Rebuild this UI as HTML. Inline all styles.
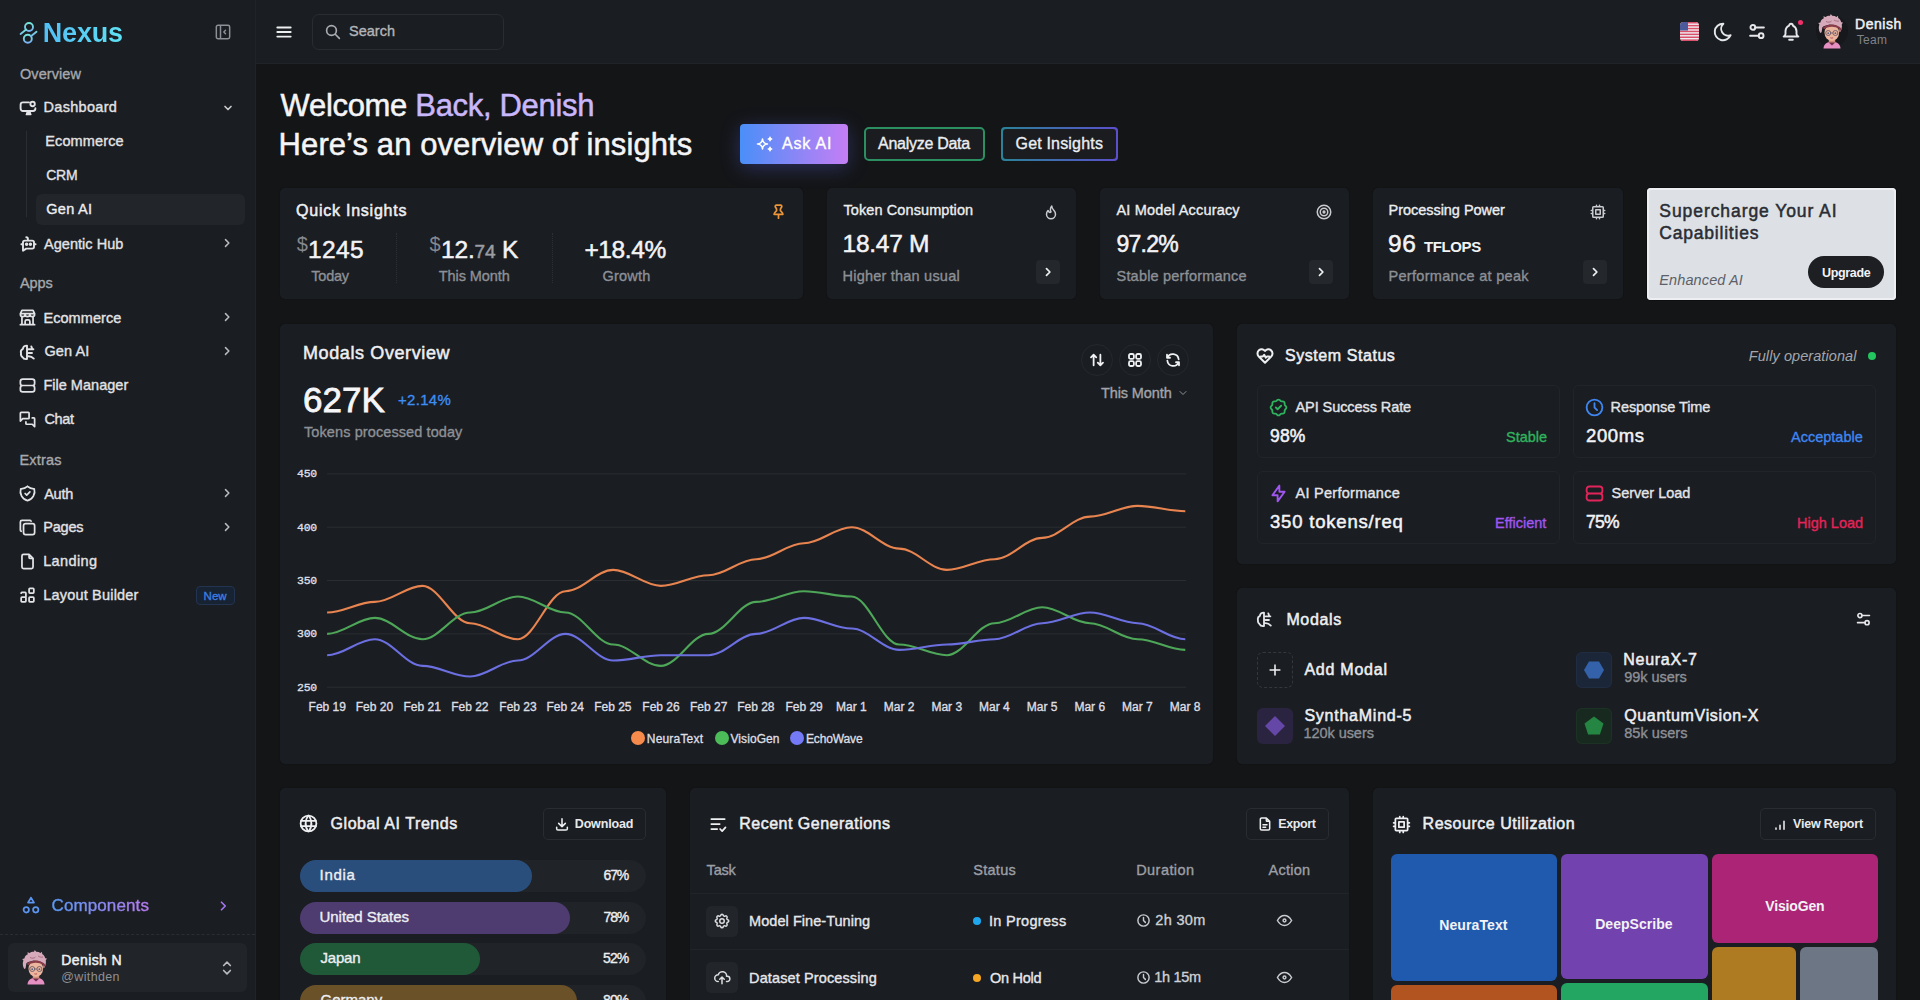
<!DOCTYPE html>
<html><head><meta charset="utf-8">
<style>
*{box-sizing:border-box;margin:0;padding:0}
html,body{width:1920px;height:1000px;overflow:hidden}
body{background:#141517;font-family:"Liberation Sans",sans-serif;color:#e8e9eb;position:relative}
.a{position:absolute}
.t{position:absolute;white-space:nowrap}
svg{position:absolute;overflow:visible}
.ic{fill:none;stroke:currentColor;stroke-linecap:round;stroke-linejoin:round}
.card{position:absolute;background:#1a1d22;border-radius:5px;box-shadow:0 0 0 1px #121315}

</style></head><body>
<div class="a" style="left:0;top:0;width:256px;height:1000px;background:#1a1d21;border-right:1px solid #202327"></div>
<div class="a" style="left:256px;top:0;width:1664px;height:64px;background:#1a1d21;border-bottom:1px solid #202327"></div>
<svg style="left:14px;top:18px" width="30" height="30" viewBox="0 0 30 30"><defs><linearGradient id="lg1" x1="0" y1="0" x2="0" y2="1"><stop offset="0" stop-color="#72e3d6"/><stop offset="1" stop-color="#7ab2f2"/></linearGradient></defs><g fill="none" stroke="url(#lg1)" stroke-width="1.9" stroke-linecap="round"><circle cx="15" cy="9" r="4"/><circle cx="13.8" cy="20.7" r="4"/><path d="M12.2 11.5L6.6 15.9M16.9 18.2L22.5 13.8"/></g></svg>
<div class="t" style="left:42.75px;top:18.06px;line-height:30px;font-size:27px;color:#e6e7ea;font-family:'Liberation Sans';font-weight:700;letter-spacing:-0.188px;background:linear-gradient(90deg,#52bff6,#5fe0f3);-webkit-background-clip:text;color:transparent;">Nexus</div>
<svg class="ic" style="left:213px;top:22px;color:#8d9096" width="20" height="20" viewBox="0 0 24 24" stroke-width="1.8"><path d="M4 6a2 2 0 0 1 2 -2h12a2 2 0 0 1 2 2v12a2 2 0 0 1 -2 2h-12a2 2 0 0 1 -2 -2z M9 4v16 M15 10l-2 2l2 2"/></svg>
<div class="t" style="left:20.00px;top:63.57px;line-height:20px;font-size:14.5px;color:#a6a8ad;font-family:'Liberation Sans';-webkit-text-stroke:0.35px currentColor;letter-spacing:0.071px;">Overview</div>
<svg class="ic" style="left:14px;top:96px;color:#e2e3e6" width="30" height="30" viewBox="0 0 30 30" stroke-width="1.9"><path d="M15 6.4H9a2.4 2.4 0 0 0 -2.4 2.4V12.6a2.4 2.4 0 0 0 2.4 2.4H19a2.4 2.4 0 0 0 2.4 -2.4V12.2"/><path d="M13.4 15.2l-1.2 3.4h4.8l-1.2 -3.4z" fill="currentColor" stroke-width="1.2"/><circle cx="18.6" cy="8" r="2.2"/></svg>
<div class="t" style="left:43.50px;top:97.42px;line-height:20px;font-size:14.5px;color:#e2e3e6;font-family:'Liberation Sans';-webkit-text-stroke:0.35px currentColor;letter-spacing:0.312px;">Dashboard</div>
<svg class="ic" style="left:219px;top:99px;color:#c9cbcf" width="18" height="18" viewBox="0 0 24 24" stroke-width="2.2"><path d="M8 10l4 4l4 -4"/></svg>
<div class="a" style="left:26px;top:131px;width:1px;height:86px;background:#2a2d32"></div>
<div class="t" style="left:45.25px;top:131.17px;line-height:20px;font-size:14.5px;color:#e2e3e6;font-family:'Liberation Sans';-webkit-text-stroke:0.35px currentColor;letter-spacing:0.125px;">Ecommerce</div>
<div class="t" style="left:46.25px;top:165.06px;line-height:20px;font-size:14px;color:#e2e3e6;font-family:'Liberation Sans';-webkit-text-stroke:0.35px currentColor;letter-spacing:-0.250px;">CRM</div>
<div class="a" style="left:36px;top:194px;width:209px;height:31px;background:#222529;border-radius:6px"></div>
<div class="t" style="left:46.25px;top:199.27px;line-height:20px;font-size:14.5px;color:#eeeff1;font-family:'Liberation Sans';-webkit-text-stroke:0.35px currentColor;letter-spacing:0.300px;">Gen AI</div>
<svg class="ic" style="left:14px;top:230px;color:#e2e3e6" width="30" height="30" viewBox="0 0 30 30" stroke-width="1.9"><path d="M10.8 10.6h7.4a1.8 1.8 0 0 1 1.8 1.8v4.4a1.8 1.8 0 0 1 -1.8 1.8h-6l-3.2 2.2v-8.4a1.8 1.8 0 0 1 1.8 -1.8z M12.3 7.2c.9 0 1.6 .8 1.6 1.6v1.6 M7.4 14.2h.6 M21 14.2h.6"/><circle cx="12.6" cy="14.3" r="0.8" fill="currentColor"/><circle cx="16.4" cy="14.3" r="0.8" fill="currentColor"/></svg>
<div class="t" style="left:44.00px;top:233.67px;line-height:20px;font-size:14.5px;color:#e2e3e6;font-family:'Liberation Sans';-webkit-text-stroke:0.35px currentColor;letter-spacing:0.040px;">Agentic Hub</div>
<div class="t" style="left:20.00px;top:273.47px;line-height:20px;font-size:14.5px;color:#a6a8ad;font-family:'Liberation Sans';-webkit-text-stroke:0.35px currentColor;letter-spacing:-0.133px;">Apps</div>
<svg class="ic" style="left:18px;top:308px;color:#e2e3e6" width="19" height="19" viewBox="0 0 24 24" stroke-width="2.2"><path d="M3 21h18 M3 7v1a3 3 0 0 0 6 0v-1m0 1a3 3 0 0 0 6 0v-1m0 1a3 3 0 0 0 6 0v-1h-18l2 -4h14l2 4 M5 21v-10.15 M19 21v-10.15 M9 21v-4a2 2 0 0 1 2 -2h2a2 2 0 0 1 2 2v4"/></svg>
<div class="t" style="left:43.40px;top:307.57px;line-height:20px;font-size:14.5px;color:#e2e3e6;font-family:'Liberation Sans';-webkit-text-stroke:0.35px currentColor;letter-spacing:0.075px;">Ecommerce</div>
<svg class="ic" style="left:14px;top:338px;color:#e2e3e6" width="30" height="30" viewBox="0 0 30 30" stroke-width="1.9"><path d="M13 7.6c-2.4 0 -3.9 1.4 -4.1 3.3c-1.7 .8 -2.4 2.5 -1.9 4.3c-.3 1.6 .2 3 1.5 3.9c.6 1.3 2 2 3.4 2h1.1z M14.6 11.3h4.8 M17.3 8.4l.9 2.4 M14.6 15h3.4 M14.6 18.2c2 0 3.8 .9 5.2 2.4"/></svg>
<div class="t" style="left:44.40px;top:341.37px;line-height:20px;font-size:14.5px;color:#e2e3e6;font-family:'Liberation Sans';-webkit-text-stroke:0.35px currentColor;letter-spacing:0.120px;">Gen AI</div>
<svg class="ic" style="left:18px;top:376px;color:#e2e3e6" width="19" height="19" viewBox="0 0 24 24" stroke-width="2.2"><path d="M3 7a3 3 0 0 1 3 -3h12a3 3 0 0 1 3 3v2a3 3 0 0 1 -3 3h-12a3 3 0 0 1 -3 -3z M3 15a3 3 0 0 1 3 -3h12a3 3 0 0 1 3 3v2a3 3 0 0 1 -3 3h-12a3 3 0 0 1 -3 -3z"/></svg>
<div class="t" style="left:43.40px;top:375.37px;line-height:20px;font-size:14.5px;color:#e2e3e6;font-family:'Liberation Sans';-webkit-text-stroke:0.35px currentColor;letter-spacing:0.018px;">File Manager</div>
<svg class="ic" style="left:18px;top:410px;color:#e2e3e6" width="19" height="19" viewBox="0 0 24 24" stroke-width="2.2"><path d="M3 14l3 -3h7a1 1 0 0 0 1 -1v-6a1 1 0 0 0 -1 -1h-9a1 1 0 0 0 -1 1v10 M10 15v2a1 1 0 0 0 1 1h7l3 3v-10a1 1 0 0 0 -1 -1h-2"/></svg>
<div class="t" style="left:44.40px;top:408.97px;line-height:20px;font-size:14.5px;color:#e2e3e6;font-family:'Liberation Sans';-webkit-text-stroke:0.35px currentColor;letter-spacing:-0.333px;">Chat</div>
<div class="t" style="left:19.40px;top:449.67px;line-height:20px;font-size:14.5px;color:#a6a8ad;font-family:'Liberation Sans';-webkit-text-stroke:0.35px currentColor;letter-spacing:0.180px;">Extras</div>
<svg class="ic" style="left:18px;top:484px;color:#e2e3e6" width="19" height="19" viewBox="0 0 24 24" stroke-width="2.2"><path d="M12 3a12 12 0 0 0 8.5 3a12 12 0 0 1 -8.5 15a12 12 0 0 1 -8.5 -15a12 12 0 0 0 8.5 -3 M9 12l2 2l4 -4"/></svg>
<div class="t" style="left:44.20px;top:483.57px;line-height:20px;font-size:14.5px;color:#e2e3e6;font-family:'Liberation Sans';-webkit-text-stroke:0.35px currentColor;letter-spacing:-0.267px;">Auth</div>
<svg class="ic" style="left:18px;top:518px;color:#e2e3e6" width="19" height="19" viewBox="0 0 24 24" stroke-width="2.2"><path d="M7 9.667a2.667 2.667 0 0 1 2.667 -2.667h8.666a2.667 2.667 0 0 1 2.667 2.667v8.666a2.667 2.667 0 0 1 -2.667 2.667h-8.666a2.667 2.667 0 0 1 -2.667 -2.667z M4.012 16.737a2.005 2.005 0 0 1 -1.012 -1.737v-10c0 -1.1 .9 -2 2 -2h10c.75 0 1.158 .385 1.5 1"/></svg>
<div class="t" style="left:43.20px;top:517.17px;line-height:20px;font-size:14.5px;color:#e2e3e6;font-family:'Liberation Sans';-webkit-text-stroke:0.35px currentColor;letter-spacing:-0.200px;">Pages</div>
<svg class="ic" style="left:18px;top:552px;color:#e2e3e6" width="19" height="19" viewBox="0 0 24 24" stroke-width="2.2"><path d="M14 3v4a1 1 0 0 0 1 1h4 M17 21h-10a2 2 0 0 1 -2 -2v-14a2 2 0 0 1 2 -2h7l5 5v11a2 2 0 0 1 -2 2z"/></svg>
<div class="t" style="left:43.20px;top:551.17px;line-height:20px;font-size:14.5px;color:#e2e3e6;font-family:'Liberation Sans';-webkit-text-stroke:0.35px currentColor;letter-spacing:0.367px;">Landing</div>
<svg class="ic" style="left:18px;top:586px;color:#e2e3e6" width="19" height="19" viewBox="0 0 24 24" stroke-width="2.2"><path d="M4 15a1 1 0 0 1 1 -1h4a1 1 0 0 1 1 1v4a1 1 0 0 1 -1 1h-4a1 1 0 0 1 -1 -1z M14 15a1 1 0 0 1 1 -1h4a1 1 0 0 1 1 1v4a1 1 0 0 1 -1 1h-4a1 1 0 0 1 -1 -1z M4 9a1 1 0 0 1 1 -1h4a1 1 0 0 1 1 1v5 M14 4a1 1 0 0 1 1 -1h4a1 1 0 0 1 1 1v4a1 1 0 0 1 -1 1h-4a1 1 0 0 1 -1 -1z"/></svg>
<div class="t" style="left:43.20px;top:584.87px;line-height:20px;font-size:14.5px;color:#e2e3e6;font-family:'Liberation Sans';-webkit-text-stroke:0.35px currentColor;letter-spacing:0.192px;">Layout Builder</div>
<div class="a" style="left:196px;top:586px;width:39px;height:19px;border:1px solid #223450;background:#172233;border-radius:4px"></div>
<div class="t" style="left:203.60px;top:585.83px;line-height:20px;font-size:11.5px;color:#3b7ee0;font-family:'Liberation Sans';-webkit-text-stroke:0.35px currentColor;">New</div>
<svg class="ic" style="left:218px;top:234px;color:#b9bbc0" width="18" height="18" viewBox="0 0 24 24" stroke-width="2"><path d="M10 7.5l4.5 4.5l-4.5 4.5"/></svg>
<svg class="ic" style="left:218px;top:308px;color:#b9bbc0" width="18" height="18" viewBox="0 0 24 24" stroke-width="2"><path d="M10 7.5l4.5 4.5l-4.5 4.5"/></svg>
<svg class="ic" style="left:218px;top:342px;color:#b9bbc0" width="18" height="18" viewBox="0 0 24 24" stroke-width="2"><path d="M10 7.5l4.5 4.5l-4.5 4.5"/></svg>
<svg class="ic" style="left:218px;top:484px;color:#b9bbc0" width="18" height="18" viewBox="0 0 24 24" stroke-width="2"><path d="M10 7.5l4.5 4.5l-4.5 4.5"/></svg>
<svg class="ic" style="left:218px;top:518px;color:#b9bbc0" width="18" height="18" viewBox="0 0 24 24" stroke-width="2"><path d="M10 7.5l4.5 4.5l-4.5 4.5"/></svg>
<svg style="left:21px;top:895px" width="20" height="21" viewBox="0 0 24 24"><g fill="none" stroke="#5b95f0" stroke-width="2.1" stroke-linecap="round" stroke-linejoin="round"><path d="M12 2.5l-3.6 6h7.2z"/><circle cx="6.3" cy="17.2" r="3.2"/><circle cx="17.7" cy="17.2" r="3.2"/></g></svg>
<div class="t" style="left:51.50px;top:895.70px;line-height:20px;font-size:17px;color:#e6e7ea;font-family:'Liberation Sans';-webkit-text-stroke:0.5px currentColor;letter-spacing:0.111px;background:linear-gradient(90deg,#5a9af5,#b77bf0);-webkit-background-clip:text;color:transparent;-webkit-text-stroke:0.4px transparent;">Components</div>
<svg class="ic" style="left:214px;top:897px;color:#a274ee" width="18" height="18" viewBox="0 0 24 24" stroke-width="2.3"><path d="M10 7l5 5l-5 5"/></svg>
<div class="a" style="left:0;top:934px;width:255px;border-top:1px dashed #2a2d32"></div>
<div class="a" style="left:8px;top:943px;width:239px;height:49px;background:#212428;border-radius:6px"></div>
<svg style="left:18px;top:948px" width="36" height="40.0" viewBox="0 0 36 40"><path d="M9.5 36.5c0-4 3.5-7 8.5-7s8.5 3 8.5 7z" fill="#e58fc2"/><path d="M14 29.8l4 3.8l4 -3.8z" fill="#70304a"/><path d="M14.8 25.5h6.4v5h-6.4z" fill="#cf8f7a"/><ellipse cx="17.8" cy="20.8" rx="7.3" ry="8.2" fill="#ebb59e"/><path d="M6.2 21c-1.6-3-1.8-6-.8-8.5l-1.2-1.5l2.2 -.6c.4-2 1.6-3.5 3.4-4.2l-.4-2l2.2 .9c1.2-1 2.8-1.5 4.4-1.3l.8-1.8l1.4 1.8c1.6-.1 3 .3 4.2 1.1l1.6-1.2l.2 2.2c1.6 1 2.6 2.5 3 4.3l1.8 .4l-1.2 1.6c.4 2.5 -.1 5 -1.4 7.6l-.9 .5l-.6-4.6c-2-2.5-6-3.5-10-3c-2.5 .5-5 1-6.5 2.5l-.8 5z" fill="#d6aabb"/><path d="M9.5 16.5c3-2.8 8.5-3.4 12.5-2.2c2.4 .6 4.2 2 5.2 4" stroke="#8a3c4a" stroke-width="2.2" fill="none"/><path d="M12 9.5c2 1 4 1 5.5 -.5M20 8c1.5 1 3.5 1.5 5 1" stroke="#a8707e" stroke-width="1" fill="none"/><g fill="none" stroke="#6d5a63" stroke-width="0.9"><circle cx="14.2" cy="21" r="2.5"/><circle cx="21.4" cy="21" r="2.5"/><path d="M16.7 21h2.2"/></g><circle cx="14.2" cy="21.2" r="0.9" fill="#5a6080"/><circle cx="21.4" cy="21.2" r="0.9" fill="#5a6080"/><path d="M16.4 25.8c.9 .4 1.8 .4 2.7 0" stroke="#b5505a" stroke-width="1" fill="none"/></svg>
<div class="t" style="left:61.30px;top:950.16px;line-height:20px;font-size:14px;color:#eeeff1;font-family:'Liberation Sans';-webkit-text-stroke:0.5px currentColor;letter-spacing:0.400px;">Denish N</div>
<div class="t" style="left:61.30px;top:966.84px;line-height:20px;font-size:12.5px;color:#8d9096;font-family:'Liberation Sans';letter-spacing:0.357px;">@withden</div>
<svg class="ic" style="left:217px;top:958px;color:#b9bbc0" width="20" height="20" viewBox="0 0 24 24" stroke-width="2"><path d="M8 9l4 -4l4 4 M16 15l-4 4l-4 -4"/></svg>
<svg class="ic" style="left:274px;top:22px;color:#eceef0" width="20" height="20" viewBox="0 0 24 24" stroke-width="2.3"><path d="M4 6.5h16 M4 12h16 M4 17.5h16"/></svg>
<div class="a" style="left:312px;top:14px;width:192px;height:36px;border:1px solid #292c31;border-radius:7px"></div>
<svg class="ic" style="left:324px;top:23px;color:#a9abb0" width="18" height="18" viewBox="0 0 24 24" stroke-width="2.2"><path d="M3.5 10a6.5 6.5 0 1 0 13 0a6.5 6.5 0 1 0 -13 0 M20.5 20.5l-5.5 -5.5"/></svg>
<div class="t" style="left:349.00px;top:21.17px;line-height:20px;font-size:14.5px;color:#b2b4b9;font-family:'Liberation Sans';-webkit-text-stroke:0.35px currentColor;">Search</div>
<svg style="left:1680px;top:22px" width="19" height="19" viewBox="0 0 19 19"><defs><clipPath id="fl"><rect x="0" y="0" width="19" height="19" rx="3.5"/></clipPath></defs><g clip-path="url(#fl)"><rect width="19" height="19" fill="#f1eef2"/><g fill="#d9506a"><rect y="0" width="19" height="1.5"/><rect y="2.9" width="19" height="1.5"/><rect y="5.8" width="19" height="1.5"/><rect y="8.7" width="19" height="1.5"/><rect y="11.6" width="19" height="1.5"/><rect y="14.5" width="19" height="1.5"/><rect y="17.4" width="19" height="1.6"/></g><rect width="8" height="8.5" fill="#4a5a9a"/></g></svg>
<svg class="ic" style="left:1712px;top:21px;color:#e6e7ea" width="22" height="22" viewBox="0 0 24 24" stroke-width="2.1"><path d="M12 3c.132 0 .263 0 .393 0a7.5 7.5 0 0 0 7.92 12.446a9 9 0 1 1 -8.313 -12.454z"/></svg>
<svg class="ic" style="left:1746px;top:21px;color:#e6e7ea" width="22" height="22" viewBox="0 0 24 24" stroke-width="2.1"><circle cx="7.5" cy="7" r="2.6"/><circle cx="16.5" cy="16" r="2.6"/><path d="M10.1 7h9.4 M4.5 16h9.4"/></svg>
<svg class="ic" style="left:1780px;top:21px;color:#e6e7ea" width="22" height="22" viewBox="0 0 24 24" stroke-width="2.1"><path d="M10 5a2 2 0 1 1 4 0a7 7 0 0 1 4 6v3a4 4 0 0 0 2 3h-16a4 4 0 0 0 2 -3v-3a7 7 0 0 1 4 -6 M10 20.5h4"/></svg>
<div class="a" style="left:1797.5px;top:20px;width:5px;height:5px;border-radius:50%;background:#f0306a"></div>
<div class="a" style="left:1816px;top:15px;width:32px;height:32px;border-radius:50%;background:#16181b"></div>
<svg style="left:1814px;top:12px" width="36" height="40.0" viewBox="0 0 36 40"><path d="M9.5 36.5c0-4 3.5-7 8.5-7s8.5 3 8.5 7z" fill="#e58fc2"/><path d="M14 29.8l4 3.8l4 -3.8z" fill="#70304a"/><path d="M14.8 25.5h6.4v5h-6.4z" fill="#cf8f7a"/><ellipse cx="17.8" cy="20.8" rx="7.3" ry="8.2" fill="#ebb59e"/><path d="M6.2 21c-1.6-3-1.8-6-.8-8.5l-1.2-1.5l2.2 -.6c.4-2 1.6-3.5 3.4-4.2l-.4-2l2.2 .9c1.2-1 2.8-1.5 4.4-1.3l.8-1.8l1.4 1.8c1.6-.1 3 .3 4.2 1.1l1.6-1.2l.2 2.2c1.6 1 2.6 2.5 3 4.3l1.8 .4l-1.2 1.6c.4 2.5 -.1 5 -1.4 7.6l-.9 .5l-.6-4.6c-2-2.5-6-3.5-10-3c-2.5 .5-5 1-6.5 2.5l-.8 5z" fill="#d6aabb"/><path d="M9.5 16.5c3-2.8 8.5-3.4 12.5-2.2c2.4 .6 4.2 2 5.2 4" stroke="#8a3c4a" stroke-width="2.2" fill="none"/><path d="M12 9.5c2 1 4 1 5.5 -.5M20 8c1.5 1 3.5 1.5 5 1" stroke="#a8707e" stroke-width="1" fill="none"/><g fill="none" stroke="#6d5a63" stroke-width="0.9"><circle cx="14.2" cy="21" r="2.5"/><circle cx="21.4" cy="21" r="2.5"/><path d="M16.7 21h2.2"/></g><circle cx="14.2" cy="21.2" r="0.9" fill="#5a6080"/><circle cx="21.4" cy="21.2" r="0.9" fill="#5a6080"/><path d="M16.4 25.8c.9 .4 1.8 .4 2.7 0" stroke="#b5505a" stroke-width="1" fill="none"/></svg>
<div class="t" style="left:1855.00px;top:14.41px;line-height:20px;font-size:14px;color:#eeeff1;font-family:'Liberation Sans';-webkit-text-stroke:0.5px currentColor;letter-spacing:0.560px;">Denish</div>
<div class="t" style="left:1856.70px;top:30.04px;line-height:20px;font-size:12px;color:#7f8289;font-family:'Liberation Sans';letter-spacing:0.333px;">Team</div>
<div class="t" style="left:280.60px;top:87.66px;line-height:36px;font-size:31px;color:#f5f5f7;font-family:'Liberation Sans';-webkit-text-stroke:0.5px currentColor;letter-spacing:-0.321px;">Welcome <span style="color:#c9b7fb">Back, Denish</span></div>
<div class="t" style="left:278.60px;top:127.11px;line-height:36px;font-size:31px;color:#f5f5f7;font-family:'Liberation Sans';-webkit-text-stroke:0.5px currentColor;letter-spacing:0.083px;">Here’s an overview of insights</div>
<div class="a" style="left:740px;top:124px;width:108px;height:40px;border-radius:4px;background:linear-gradient(90deg,#4a8ff8,#c57ef5);box-shadow:0 4px 20px rgba(100,110,250,0.30)"></div>
<svg style="left:755px;top:134px" width="20" height="20" viewBox="0 0 24 24" fill="none" stroke="#fff" stroke-width="1.9" stroke-linejoin="round" stroke-linecap="round"><path d="M16 18a2 2 0 0 1 2 2a2 2 0 0 1 2 -2a2 2 0 0 1 -2 -2a2 2 0 0 1 -2 2zm0 -12a2 2 0 0 1 2 2a2 2 0 0 1 2 -2a2 2 0 0 1 -2 -2a2 2 0 0 1 -2 2zm-7 12a6 6 0 0 1 6 -6a6 6 0 0 1 -6 -6a6 6 0 0 1 -6 6a6 6 0 0 1 6 6z"/></svg>
<div class="t" style="left:782.00px;top:134.18px;line-height:20px;font-size:16px;color:#ffffff;font-family:'Liberation Sans';-webkit-text-stroke:0.35px currentColor;letter-spacing:0.800px;">Ask AI</div>
<div class="a" style="left:864px;top:127px;width:121px;height:34px;border-radius:5px;border:2px solid #2b8f62;background:#1a1c20"></div>
<div class="t" style="left:878.00px;top:134.18px;line-height:20px;font-size:16px;color:#eceef0;font-family:'Liberation Sans';-webkit-text-stroke:0.35px currentColor;letter-spacing:-0.273px;">Analyze Data</div>
<div class="a" style="left:1001px;top:127px;width:117px;height:34px;border-radius:4px;padding:2px;background:linear-gradient(90deg,#2a8398,#5b4fcc)"><div style="width:100%;height:100%;background:#1a1c20;border-radius:3px"></div></div>
<div class="t" style="left:1015.50px;top:134.18px;line-height:20px;font-size:16px;color:#eceef0;font-family:'Liberation Sans';-webkit-text-stroke:0.35px currentColor;letter-spacing:0.182px;">Get Insights</div>
<div class="card" style="left:280px;top:188px;width:523px;height:111px"></div>
<div class="t" style="left:296.00px;top:201.38px;line-height:20px;font-size:16px;color:#eeeff1;font-family:'Liberation Sans';-webkit-text-stroke:0.5px currentColor;letter-spacing:0.769px;">Quick Insights</div>
<svg class="ic" style="left:769px;top:202px;color:#ec953a" width="19" height="19" viewBox="0 0 24 24" stroke-width="2.2"><path d="M9.2 4h5.6a1.6 1.6 0 0 1 .9 2.7c-.9 .9 -1.4 2 -1.4 3.6c0 1.6 3.2 2.4 3.2 5.2h-11c0 -2.8 3.2 -3.6 3.2 -5.2c0 -1.6 -.5 -2.7 -1.4 -3.6a1.6 1.6 0 0 1 .9 -2.7z M12 15.5v5"/></svg>
<div class="t" style="left:296.70px;top:233.73px;line-height:20px;font-size:20px;color:#85888e;font-family:'Liberation Sans';">$</div>
<div class="t" style="left:308.00px;top:239.53px;line-height:20px;font-size:24.5px;color:#f3f3f5;font-family:'Liberation Sans';-webkit-text-stroke:0.5px currentColor;letter-spacing:0.333px;">1245</div>
<div class="t" style="left:311.30px;top:266.17px;line-height:20px;font-size:14.5px;color:#8d9096;font-family:'Liberation Sans';-webkit-text-stroke:0.35px currentColor;letter-spacing:-0.225px;">Today</div>
<div class="a" style="left:396px;top:233px;height:50px;border-left:1.5px dotted #2c2f34"></div>
<div class="t" style="left:429.60px;top:233.73px;line-height:20px;font-size:20px;color:#85888e;font-family:'Liberation Sans';">$</div>
<div class="t" style="left:441.00px;top:239.53px;line-height:20px;font-size:24.5px;color:#f3f3f5;font-family:'Liberation Sans';-webkit-text-stroke:0.5px currentColor;letter-spacing:-0.167px;">12.<span style="font-size:19px;color:#9a9da3">74</span> K</div>
<div class="t" style="left:438.80px;top:266.17px;line-height:20px;font-size:14.5px;color:#8d9096;font-family:'Liberation Sans';-webkit-text-stroke:0.35px currentColor;letter-spacing:-0.089px;">This Month</div>
<div class="a" style="left:552px;top:233px;height:50px;border-left:1.5px dotted #2c2f34"></div>
<div class="t" style="left:584.40px;top:239.53px;line-height:20px;font-size:24.5px;color:#f3f3f5;font-family:'Liberation Sans';-webkit-text-stroke:0.5px currentColor;letter-spacing:-0.380px;">+18.4%</div>
<div class="t" style="left:602.40px;top:266.17px;line-height:20px;font-size:14.5px;color:#8d9096;font-family:'Liberation Sans';-webkit-text-stroke:0.35px currentColor;letter-spacing:0.220px;">Growth</div>
<div class="card" style="left:827px;top:188px;width:249px;height:111px"></div>
<div class="t" style="left:843.50px;top:199.97px;line-height:20px;font-size:14.5px;color:#eceef0;font-family:'Liberation Sans';-webkit-text-stroke:0.35px currentColor;letter-spacing:0.094px;">Token Consumption</div>
<svg class="ic" style="left:1042px;top:203px;color:#c9cbcf" width="18" height="18" viewBox="0 0 24 24" stroke-width="2"><g transform="translate(24 0) scale(-1 1)"><path d="M12 12c2 -2.96 0 -7 -1 -8c0 3.038 -1.773 4.741 -3 6c-1.226 1.26 -2 3.24 -2 5a6 6 0 1 0 12 0c0 -1.532 -1.056 -3.94 -2 -5c-1.786 3 -2.791 3 -4 2z"/></g></svg>
<div class="t" style="left:842.50px;top:234.18px;line-height:20px;font-size:24.5px;color:#f3f3f5;font-family:'Liberation Sans';-webkit-text-stroke:0.5px currentColor;letter-spacing:-0.250px;">18.47 M</div>
<div class="t" style="left:842.50px;top:266.17px;line-height:20px;font-size:14.5px;color:#8d9096;font-family:'Liberation Sans';-webkit-text-stroke:0.35px currentColor;letter-spacing:0.219px;">Higher than usual</div>
<div class="a" style="left:1036px;top:260px;width:24px;height:24px;background:#24272b;border-radius:4px"></div>
<svg class="ic" style="left:1039px;top:263px;color:#eeeff1" width="18" height="18" viewBox="0 0 24 24" stroke-width="2.3"><path d="M10 7.5l4.5 4.5l-4.5 4.5"/></svg>
<div class="card" style="left:1100px;top:188px;width:249px;height:111px"></div>
<div class="t" style="left:1116.50px;top:199.97px;line-height:20px;font-size:14.5px;color:#eceef0;font-family:'Liberation Sans';-webkit-text-stroke:0.35px currentColor;letter-spacing:0.188px;">AI Model Accuracy</div>
<svg class="ic" style="left:1315px;top:203px;color:#c9cbcf" width="18" height="18" viewBox="0 0 24 24" stroke-width="2"><circle cx="12" cy="12" r="1.2"/><circle cx="12" cy="12" r="5"/><circle cx="12" cy="12" r="9"/></svg>
<div class="t" style="left:1116.50px;top:234.16px;line-height:20px;font-size:23px;color:#f3f3f5;font-family:'Liberation Sans';-webkit-text-stroke:0.5px currentColor;letter-spacing:-0.775px;">97.2%</div>
<div class="t" style="left:1116.50px;top:266.17px;line-height:20px;font-size:14.5px;color:#8d9096;font-family:'Liberation Sans';-webkit-text-stroke:0.35px currentColor;letter-spacing:0.206px;">Stable performance</div>
<div class="a" style="left:1309px;top:260px;width:24px;height:24px;background:#24272b;border-radius:4px"></div>
<svg class="ic" style="left:1312px;top:263px;color:#eeeff1" width="18" height="18" viewBox="0 0 24 24" stroke-width="2.3"><path d="M10 7.5l4.5 4.5l-4.5 4.5"/></svg>
<div class="card" style="left:1373px;top:188px;width:250px;height:111px"></div>
<div class="t" style="left:1388.50px;top:199.97px;line-height:20px;font-size:14.5px;color:#eceef0;font-family:'Liberation Sans';-webkit-text-stroke:0.35px currentColor;letter-spacing:-0.033px;">Processing Power</div>
<svg class="ic" style="left:1589px;top:203px;color:#c9cbcf" width="18" height="18" viewBox="0 0 24 24" stroke-width="2"><path d="M5 6a1 1 0 0 1 1 -1h12a1 1 0 0 1 1 1v12a1 1 0 0 1 -1 1h-12a1 1 0 0 1 -1 -1z M9 9h6v6h-6z M3 10h2 M3 14h2 M10 3v2 M14 3v2 M21 10h-2 M21 14h-2 M14 21v-2 M10 21v-2"/></svg>
<div class="t" style="left:1388.50px;top:266.17px;line-height:20px;font-size:14.5px;color:#8d9096;font-family:'Liberation Sans';-webkit-text-stroke:0.35px currentColor;letter-spacing:0.306px;">Performance at peak</div>
<div class="a" style="left:1583px;top:260px;width:24px;height:24px;background:#24272b;border-radius:4px"></div>
<svg class="ic" style="left:1586px;top:263px;color:#eeeff1" width="18" height="18" viewBox="0 0 24 24" stroke-width="2.3"><path d="M10 7.5l4.5 4.5l-4.5 4.5"/></svg>
<div class="t" style="left:1388.00px;top:234.18px;line-height:20px;font-size:24.5px;color:#f3f3f5;font-family:'Liberation Sans';-webkit-text-stroke:0.5px currentColor;letter-spacing:0.600px;">96</div>
<div class="t" style="left:1424.00px;top:236.77px;line-height:20px;font-size:15px;color:#f3f3f5;font-family:'Liberation Sans';font-weight:700;letter-spacing:-0.400px;">TFLOPS</div>
<div class="a" style="left:1647px;top:188px;width:249px;height:112px;background:#dde1e6;border-radius:4px;box-shadow:inset 0 0 0 2px #eceef1,0 0 0 1px #0e0f11"></div>
<div class="t" style="left:1659.30px;top:199.70px;line-height:22px;font-size:17.5px;color:#2a2d33;font-family:'Liberation Sans';-webkit-text-stroke:0.5px currentColor;letter-spacing:0.928px;">Supercharge Your AI</div>
<div class="t" style="left:1659.30px;top:221.90px;line-height:22px;font-size:17.5px;color:#2a2d33;font-family:'Liberation Sans';-webkit-text-stroke:0.5px currentColor;letter-spacing:0.791px;">Capabilities</div>
<div class="t" style="left:1659.30px;top:269.92px;line-height:20px;font-size:14.5px;color:#5c5f67;font-family:'Liberation Sans';font-style:italic;letter-spacing:0.110px;">Enhanced AI</div>
<div class="a" style="left:1808px;top:256px;width:76px;height:32px;background:#1d1f22;border-radius:16px"></div>
<div class="t" style="left:1822.00px;top:262.64px;line-height:20px;font-size:12.5px;color:#f3f3f5;font-family:'Liberation Sans';font-weight:700;letter-spacing:-0.333px;">Upgrade</div>
<div class="card" style="left:280px;top:324px;width:933px;height:440px"></div>
<div class="t" style="left:303.00px;top:343.31px;line-height:20px;font-size:18px;color:#eeeff1;font-family:'Liberation Sans';-webkit-text-stroke:0.5px currentColor;letter-spacing:0.607px;">Modals Overview</div>
<div class="t" style="left:303.00px;top:379.50px;line-height:40px;font-size:35px;color:#f6f6f8;font-family:'Liberation Sans';-webkit-text-stroke:0.5px currentColor;-webkit-text-stroke:0.8px currentColor;">627K</div>
<div class="t" style="left:398.00px;top:390.07px;line-height:20px;font-size:15px;color:#3d8ef2;font-family:'Liberation Sans';-webkit-text-stroke:0.35px currentColor;letter-spacing:0.300px;">+2.14%</div>
<div class="t" style="left:304.00px;top:422.42px;line-height:20px;font-size:14.5px;color:#8d9096;font-family:'Liberation Sans';-webkit-text-stroke:0.35px currentColor;letter-spacing:0.095px;">Tokens processed today</div>
<div class="a" style="left:1081px;top:344px;width:32px;height:32px;border-radius:50%;border:1px solid #25282c"></div>
<div class="a" style="left:1119px;top:344px;width:32px;height:32px;border-radius:50%;border:1px solid #25282c"></div>
<div class="a" style="left:1157px;top:344px;width:32px;height:32px;border-radius:50%;border:1px solid #25282c"></div>
<svg class="ic" style="left:1088px;top:351px;color:#f0f1f3" width="18" height="18" viewBox="0 0 24 24" stroke-width="2.4"><path d="M4 8.5l3.5 -3.5l3.5 3.5 M7.5 5v14 M20 15.5l-3.5 3.5l-3.5 -3.5 M16.5 19v-14"/></svg>
<svg class="ic" style="left:1126px;top:351px;color:#f0f1f3" width="18" height="18" viewBox="0 0 24 24" stroke-width="2.4"><rect x="4" y="4" width="6.5" height="6.5" rx="2"/><rect x="13.5" y="4" width="6.5" height="6.5" rx="2"/><rect x="4" y="13.5" width="6.5" height="6.5" rx="2"/><rect x="13.5" y="13.5" width="6.5" height="6.5" rx="2"/></svg>
<svg class="ic" style="left:1164px;top:351px;color:#f0f1f3" width="18" height="18" viewBox="0 0 24 24" stroke-width="2.4"><path d="M19.5 11a7.8 7.8 0 0 0 -15 -2m-.5 -4v4h4 M4.5 13a7.8 7.8 0 0 0 15 2m.5 4v-4h-4"/></svg>
<div class="t" style="left:1101.00px;top:383.17px;line-height:20px;font-size:14.5px;color:#a2a4a9;font-family:'Liberation Sans';-webkit-text-stroke:0.35px currentColor;letter-spacing:-0.111px;">This Month</div>
<svg class="ic" style="left:1177px;top:387px;color:#8d9096" width="12" height="12" viewBox="0 0 24 24" stroke-width="2"><path d="M6 9l6 6l6 -6"/></svg>
<div class="t" style="left:297.00px;top:464.33px;line-height:20px;font-size:11.5px;color:#dcdee2;font-family:'Liberation Mono';-webkit-text-stroke:0.35px currentColor;letter-spacing:-0.250px;">450</div>
<div class="t" style="left:297.00px;top:517.66px;line-height:20px;font-size:11.5px;color:#dcdee2;font-family:'Liberation Mono';-webkit-text-stroke:0.35px currentColor;letter-spacing:-0.250px;">400</div>
<div class="t" style="left:297.00px;top:570.98px;line-height:20px;font-size:11.5px;color:#dcdee2;font-family:'Liberation Mono';-webkit-text-stroke:0.35px currentColor;letter-spacing:-0.250px;">350</div>
<div class="t" style="left:297.00px;top:624.31px;line-height:20px;font-size:11.5px;color:#dcdee2;font-family:'Liberation Mono';-webkit-text-stroke:0.35px currentColor;letter-spacing:-0.250px;">300</div>
<div class="t" style="left:297.00px;top:677.63px;line-height:20px;font-size:11.5px;color:#dcdee2;font-family:'Liberation Mono';-webkit-text-stroke:0.35px currentColor;letter-spacing:-0.250px;">250</div>
<div class="t" style="left:308.60px;top:697.14px;line-height:20px;font-size:12px;color:#dcdee2;font-family:'Liberation Sans';-webkit-text-stroke:0.35px currentColor;">Feb 19</div>
<div class="t" style="left:355.78px;top:697.14px;line-height:20px;font-size:12px;color:#dcdee2;font-family:'Liberation Sans';-webkit-text-stroke:0.35px currentColor;">Feb 20</div>
<div class="t" style="left:403.46px;top:697.14px;line-height:20px;font-size:12px;color:#dcdee2;font-family:'Liberation Sans';-webkit-text-stroke:0.35px currentColor;">Feb 21</div>
<div class="t" style="left:451.13px;top:697.14px;line-height:20px;font-size:12px;color:#dcdee2;font-family:'Liberation Sans';-webkit-text-stroke:0.35px currentColor;">Feb 22</div>
<div class="t" style="left:499.31px;top:697.14px;line-height:20px;font-size:12px;color:#dcdee2;font-family:'Liberation Sans';-webkit-text-stroke:0.35px currentColor;">Feb 23</div>
<div class="t" style="left:546.49px;top:697.14px;line-height:20px;font-size:12px;color:#dcdee2;font-family:'Liberation Sans';-webkit-text-stroke:0.35px currentColor;">Feb 24</div>
<div class="t" style="left:594.17px;top:697.14px;line-height:20px;font-size:12px;color:#dcdee2;font-family:'Liberation Sans';-webkit-text-stroke:0.35px currentColor;">Feb 25</div>
<div class="t" style="left:642.34px;top:697.14px;line-height:20px;font-size:12px;color:#dcdee2;font-family:'Liberation Sans';-webkit-text-stroke:0.35px currentColor;">Feb 26</div>
<div class="t" style="left:690.02px;top:697.14px;line-height:20px;font-size:12px;color:#dcdee2;font-family:'Liberation Sans';-webkit-text-stroke:0.35px currentColor;">Feb 27</div>
<div class="t" style="left:737.20px;top:697.14px;line-height:20px;font-size:12px;color:#dcdee2;font-family:'Liberation Sans';-webkit-text-stroke:0.35px currentColor;">Feb 28</div>
<div class="t" style="left:785.38px;top:697.14px;line-height:20px;font-size:12px;color:#dcdee2;font-family:'Liberation Sans';-webkit-text-stroke:0.35px currentColor;">Feb 29</div>
<div class="t" style="left:836.06px;top:697.14px;line-height:20px;font-size:12px;color:#dcdee2;font-family:'Liberation Sans';-webkit-text-stroke:0.35px currentColor;">Mar 1</div>
<div class="t" style="left:883.73px;top:697.14px;line-height:20px;font-size:12px;color:#dcdee2;font-family:'Liberation Sans';-webkit-text-stroke:0.35px currentColor;">Mar 2</div>
<div class="t" style="left:931.41px;top:697.14px;line-height:20px;font-size:12px;color:#dcdee2;font-family:'Liberation Sans';-webkit-text-stroke:0.35px currentColor;">Mar 3</div>
<div class="t" style="left:979.09px;top:697.14px;line-height:20px;font-size:12px;color:#dcdee2;font-family:'Liberation Sans';-webkit-text-stroke:0.35px currentColor;">Mar 4</div>
<div class="t" style="left:1026.77px;top:697.14px;line-height:20px;font-size:12px;color:#dcdee2;font-family:'Liberation Sans';-webkit-text-stroke:0.35px currentColor;">Mar 5</div>
<div class="t" style="left:1074.44px;top:697.14px;line-height:20px;font-size:12px;color:#dcdee2;font-family:'Liberation Sans';-webkit-text-stroke:0.35px currentColor;">Mar 6</div>
<div class="t" style="left:1122.12px;top:697.14px;line-height:20px;font-size:12px;color:#dcdee2;font-family:'Liberation Sans';-webkit-text-stroke:0.35px currentColor;">Mar 7</div>
<div class="t" style="left:1169.80px;top:697.14px;line-height:20px;font-size:12px;color:#dcdee2;font-family:'Liberation Sans';-webkit-text-stroke:0.35px currentColor;">Mar 8</div>
<svg style="left:0;top:0" width="1920" height="1000"><line x1="327" x2="1186" y1="473.9" y2="473.9" stroke="#2a2d31" stroke-width="1"/><line x1="327" x2="1186" y1="527.2" y2="527.2" stroke="#2a2d31" stroke-width="1"/><line x1="327" x2="1186" y1="580.5" y2="580.5" stroke="#2a2d31" stroke-width="1"/><line x1="327" x2="1186" y1="633.9" y2="633.9" stroke="#2a2d31" stroke-width="1"/><line x1="327" x2="1186" y1="687.2" y2="687.2" stroke="#2a2d31" stroke-width="1"/><path d="M327.1 612.5 C343.8 612.5 358.1 601.9 374.8 601.9 C391.5 601.9 405.8 585.9 422.5 585.9 C439.1 585.9 453.4 623.2 470.1 623.2 C486.8 623.2 501.1 639.2 517.8 639.2 C534.5 639.2 548.8 591.2 565.5 591.2 C582.2 591.2 596.5 569.9 613.2 569.9 C629.9 569.9 644.2 585.9 660.8 585.9 C677.5 585.9 691.8 575.2 708.5 575.2 C725.2 575.2 739.5 559.2 756.2 559.2 C772.9 559.2 787.2 543.2 803.9 543.2 C820.6 543.2 834.9 527.2 851.6 527.2 C868.2 527.2 882.5 548.6 899.2 548.6 C915.9 548.6 930.2 569.9 946.9 569.9 C963.6 569.9 977.9 559.2 994.6 559.2 C1011.3 559.2 1025.6 537.9 1042.3 537.9 C1059.0 537.9 1073.3 516.6 1089.9 516.6 C1106.6 516.6 1120.9 505.9 1137.6 505.9 C1154.3 505.9 1168.6 511.2 1185.3 511.2" fill="none" stroke="#e8844f" stroke-width="2.1"/><path d="M327.1 633.9 C343.8 633.9 358.1 617.9 374.8 617.9 C391.5 617.9 405.8 639.2 422.5 639.2 C439.1 639.2 453.4 612.5 470.1 612.5 C486.8 612.5 501.1 596.5 517.8 596.5 C534.5 596.5 548.8 612.5 565.5 612.5 C582.2 612.5 596.5 644.5 613.2 644.5 C629.9 644.5 644.2 665.9 660.8 665.9 C677.5 665.9 691.8 633.9 708.5 633.9 C725.2 633.9 739.5 601.9 756.2 601.9 C772.9 601.9 787.2 591.2 803.9 591.2 C820.6 591.2 834.9 596.5 851.6 596.5 C868.2 596.5 882.5 644.5 899.2 644.5 C915.9 644.5 930.2 655.2 946.9 655.2 C963.6 655.2 977.9 623.2 994.6 623.2 C1011.3 623.2 1025.6 607.2 1042.3 607.2 C1059.0 607.2 1073.3 623.2 1089.9 623.2 C1106.6 623.2 1120.9 639.2 1137.6 639.2 C1154.3 639.2 1168.6 649.9 1185.3 649.9" fill="none" stroke="#4ea658" stroke-width="2.1"/><path d="M327.1 655.2 C343.8 655.2 358.1 639.2 374.8 639.2 C391.5 639.2 405.8 665.9 422.5 665.9 C439.1 665.9 453.4 676.5 470.1 676.5 C486.8 676.5 501.1 660.5 517.8 660.5 C534.5 660.5 548.8 633.9 565.5 633.9 C582.2 633.9 596.5 660.5 613.2 660.5 C629.9 660.5 644.2 655.2 660.8 655.2 C677.5 655.2 691.8 655.2 708.5 655.2 C725.2 655.2 739.5 633.9 756.2 633.9 C772.9 633.9 787.2 617.9 803.9 617.9 C820.6 617.9 834.9 628.5 851.6 628.5 C868.2 628.5 882.5 649.9 899.2 649.9 C915.9 649.9 930.2 644.5 946.9 644.5 C963.6 644.5 977.9 639.2 994.6 639.2 C1011.3 639.2 1025.6 623.2 1042.3 623.2 C1059.0 623.2 1073.3 612.5 1089.9 612.5 C1106.6 612.5 1120.9 623.2 1137.6 623.2 C1154.3 623.2 1168.6 639.2 1185.3 639.2" fill="none" stroke="#6b6fe0" stroke-width="2.1"/></svg>
<div class="a" style="left:631px;top:731px;width:14px;height:14px;border-radius:50%;background:#f78b4c"></div>
<div class="t" style="left:646.80px;top:728.54px;line-height:20px;font-size:12px;color:#dcdee2;font-family:'Liberation Sans';-webkit-text-stroke:0.35px currentColor;letter-spacing:0.188px;">NeuraText</div>
<div class="a" style="left:715px;top:731px;width:14px;height:14px;border-radius:50%;background:#4cbc58"></div>
<div class="t" style="left:730.50px;top:728.54px;line-height:20px;font-size:12px;color:#dcdee2;font-family:'Liberation Sans';-webkit-text-stroke:0.35px currentColor;letter-spacing:0.071px;">VisioGen</div>
<div class="a" style="left:790px;top:731px;width:14px;height:14px;border-radius:50%;background:#7479f5"></div>
<div class="t" style="left:806.00px;top:728.54px;line-height:20px;font-size:12px;color:#dcdee2;font-family:'Liberation Sans';-webkit-text-stroke:0.35px currentColor;letter-spacing:-0.143px;">EchoWave</div>
<div class="card" style="left:1237px;top:324px;width:659px;height:240px"></div>
<svg class="ic" style="left:1255px;top:346px;color:#eeeff1" width="20" height="20" viewBox="0 0 24 24" stroke-width="2.4"><path d="M19.5 12.572l-7.5 7.428l-7.5 -7.428a5 5 0 1 1 7.5 -6.566a5 5 0 1 1 7.5 6.572 M7 12.5h2.5l1.5 -2l2 3.5l1.5 -1.5h2.5"/></svg>
<div class="t" style="left:1285.00px;top:345.78px;line-height:20px;font-size:16px;color:#eeeff1;font-family:'Liberation Sans';-webkit-text-stroke:0.5px currentColor;letter-spacing:0.558px;">System Status</div>
<div class="t" style="left:1748.80px;top:345.57px;line-height:20px;font-size:14.5px;color:#a3a6ab;font-family:'Liberation Sans';font-style:italic;letter-spacing:0.075px;">Fully operational</div>
<div class="a" style="left:1868px;top:352px;width:8px;height:8px;border-radius:50%;background:#22c55e"></div>
<div class="a" style="left:1257px;top:385px;width:303px;height:73px;border:1px solid #212428;border-radius:6px"></div>
<svg class="ic" style="left:1268px;top:396.5px;color:#2fb35e" width="21" height="21" viewBox="0 0 24 24" stroke-width="2.1"><path d="M5 7.2a2.2 2.2 0 0 1 2.2 -2.2h1a2.2 2.2 0 0 0 1.55 -.64l.7 -.7a2.2 2.2 0 0 1 3.12 0l.7 .7c.412 .41 .97 .64 1.55 .64h1a2.2 2.2 0 0 1 2.2 2.2v1c0 .58 .23 1.138 .64 1.55l.7 .7a2.2 2.2 0 0 1 0 3.12l-.7 .7a2.2 2.2 0 0 0 -.64 1.55v1a2.2 2.2 0 0 1 -2.2 2.2h-1a2.2 2.2 0 0 0 -1.55 .64l-.7 .7a2.2 2.2 0 0 1 -3.12 0l-.7 -.7a2.2 2.2 0 0 0 -1.55 -.64h-1a2.2 2.2 0 0 1 -2.2 -2.2v-1a2.2 2.2 0 0 0 -.64 -1.55l-.7 -.7a2.2 2.2 0 0 1 0 -3.12l.7 -.7a2.2 2.2 0 0 0 .64 -1.55v-1 M9 12l2 2l4 -4"/></svg>
<div class="t" style="left:1295.50px;top:396.57px;line-height:20px;font-size:14.5px;color:#e4e5e8;font-family:'Liberation Sans';-webkit-text-stroke:0.35px currentColor;letter-spacing:-0.080px;">API Success Rate</div>
<div class="t" style="left:1270.00px;top:426.20px;line-height:20px;font-size:17.5px;color:#f3f3f5;font-family:'Liberation Sans';-webkit-text-stroke:0.5px currentColor;letter-spacing:0.200px;">98%</div>
<div class="t" style="left:1506.00px;top:427.17px;line-height:20px;font-size:14.5px;color:#2fb35e;font-family:'Liberation Sans';-webkit-text-stroke:0.35px currentColor;">Stable</div>
<div class="a" style="left:1573px;top:385px;width:303px;height:73px;border:1px solid #212428;border-radius:6px"></div>
<svg class="ic" style="left:1584px;top:396.5px;color:#3f86f0" width="21" height="21" viewBox="0 0 24 24" stroke-width="2.1"><circle cx="12" cy="12" r="9"/><path d="M12 7v5l3 3"/></svg>
<div class="t" style="left:1610.50px;top:396.57px;line-height:20px;font-size:14.5px;color:#e4e5e8;font-family:'Liberation Sans';-webkit-text-stroke:0.35px currentColor;letter-spacing:-0.075px;">Response Time</div>
<div class="t" style="left:1586.00px;top:426.21px;line-height:20px;font-size:18.5px;color:#f3f3f5;font-family:'Liberation Sans';-webkit-text-stroke:0.5px currentColor;letter-spacing:0.600px;">200ms</div>
<div class="t" style="left:1791.00px;top:427.17px;line-height:20px;font-size:14.5px;color:#3f86f0;font-family:'Liberation Sans';-webkit-text-stroke:0.35px currentColor;">Acceptable</div>
<div class="a" style="left:1257px;top:471px;width:303px;height:73px;border:1px solid #212428;border-radius:6px"></div>
<svg class="ic" style="left:1268px;top:482.5px;color:#a056f0" width="21" height="21" viewBox="0 0 24 24" stroke-width="2.1"><path d="M13 3v7h6l-8 11v-7h-6l8 -11"/></svg>
<div class="t" style="left:1295.50px;top:482.57px;line-height:20px;font-size:14.5px;color:#e4e5e8;font-family:'Liberation Sans';-webkit-text-stroke:0.35px currentColor;letter-spacing:0.269px;">AI Performance</div>
<div class="t" style="left:1270.00px;top:512.21px;line-height:20px;font-size:18.5px;color:#f3f3f5;font-family:'Liberation Sans';-webkit-text-stroke:0.5px currentColor;letter-spacing:0.808px;">350 tokens/req</div>
<div class="t" style="left:1495.00px;top:513.17px;line-height:20px;font-size:14.5px;color:#a056f0;font-family:'Liberation Sans';-webkit-text-stroke:0.35px currentColor;">Efficient</div>
<div class="a" style="left:1573px;top:471px;width:303px;height:73px;border:1px solid #212428;border-radius:6px"></div>
<svg class="ic" style="left:1584px;top:482.5px;color:#e3245a" width="21" height="21" viewBox="0 0 24 24" stroke-width="2.1"><path d="M3 7a3 3 0 0 1 3 -3h12a3 3 0 0 1 3 3v2a3 3 0 0 1 -3 3h-12a3 3 0 0 1 -3 -3z M3 15a3 3 0 0 1 3 -3h12a3 3 0 0 1 3 3v2a3 3 0 0 1 -3 3h-12a3 3 0 0 1 -3 -3z"/></svg>
<div class="t" style="left:1611.50px;top:482.57px;line-height:20px;font-size:14.5px;color:#e4e5e8;font-family:'Liberation Sans';-webkit-text-stroke:0.35px currentColor;letter-spacing:-0.010px;">Server Load</div>
<div class="t" style="left:1586.00px;top:512.20px;line-height:20px;font-size:17.5px;color:#f3f3f5;font-family:'Liberation Sans';-webkit-text-stroke:0.5px currentColor;letter-spacing:-0.700px;">75%</div>
<div class="t" style="left:1797.00px;top:513.17px;line-height:20px;font-size:14.5px;color:#e3245a;font-family:'Liberation Sans';-webkit-text-stroke:0.35px currentColor;">High Load</div>
<div class="card" style="left:1237px;top:588px;width:659px;height:176px"></div>
<svg class="ic" style="left:1251px;top:605px;color:#e6e7ea" width="30" height="30" viewBox="0 0 30 30" stroke-width="1.8"><path d="M13 7.6c-2.4 0 -3.9 1.4 -4.1 3.3c-1.7 .8 -2.4 2.5 -1.9 4.3c-.3 1.6 .2 3 1.5 3.9c.6 1.3 2 2 3.4 2h1.1z M14.6 11.3h4.8 M17.3 8.4l.9 2.4 M14.6 15h3.4 M14.6 18.2c2 0 3.8 .9 5.2 2.4"/></svg>
<div class="t" style="left:1286.40px;top:609.98px;line-height:20px;font-size:16px;color:#eeeff1;font-family:'Liberation Sans';-webkit-text-stroke:0.5px currentColor;letter-spacing:0.640px;">Modals</div>
<svg class="ic" style="left:1854px;top:610px;color:#e6e7ea" width="19" height="19" viewBox="0 0 24 24" stroke-width="2.1"><circle cx="7.5" cy="7" r="2.6"/><circle cx="16.5" cy="16" r="2.6"/><path d="M10.1 7h9.4 M4.5 16h9.4"/></svg>
<div class="a" style="left:1257px;top:652px;width:36px;height:36px;border:1px dashed #34373c;border-radius:6px"></div>
<svg class="ic" style="left:1266px;top:661px;color:#eeeff1" width="18" height="18" viewBox="0 0 24 24" stroke-width="2.1"><path d="M12 5.5v13 M5.5 12h13"/></svg>
<div class="t" style="left:1304.40px;top:659.78px;line-height:20px;font-size:16px;color:#eeeff1;font-family:'Liberation Sans';-webkit-text-stroke:0.5px currentColor;letter-spacing:0.762px;">Add Modal</div>
<div class="a" style="left:1576px;top:652px;width:36px;height:36px;background:#1c2639;border-radius:6px;box-shadow:inset 0 0 0 1px #202c42"></div>
<svg style="left:1582px;top:658px" width="24" height="24" viewBox="0 0 24 24"><path d="M7 3.5h10l5 8.5l-5 8.5h-10l-5 -8.5z" fill="#3462aa"/></svg>
<div class="t" style="left:1623.20px;top:649.68px;line-height:20px;font-size:16px;color:#eeeff1;font-family:'Liberation Sans';-webkit-text-stroke:0.5px currentColor;letter-spacing:0.743px;">NeuraX-7</div>
<div class="t" style="left:1624.20px;top:666.97px;line-height:20px;font-size:14.5px;color:#8d9096;font-family:'Liberation Sans';-webkit-text-stroke:0.35px currentColor;letter-spacing:-0.025px;">99k users</div>
<div class="a" style="left:1257px;top:708px;width:36px;height:36px;background:#2a2440;border-radius:6px"></div>
<svg style="left:1263px;top:714px" width="24" height="24" viewBox="0 0 24 24"><path d="M12 2l10 10l-10 10l-10 -10z" fill="#6447a6"/></svg>
<div class="t" style="left:1304.40px;top:705.68px;line-height:20px;font-size:16px;color:#eeeff1;font-family:'Liberation Sans';-webkit-text-stroke:0.5px currentColor;letter-spacing:0.755px;">SynthaMind-5</div>
<div class="t" style="left:1303.40px;top:723.17px;line-height:20px;font-size:14.5px;color:#8d9096;font-family:'Liberation Sans';-webkit-text-stroke:0.35px currentColor;letter-spacing:-0.044px;">120k users</div>
<div class="a" style="left:1576px;top:708px;width:36px;height:36px;background:#182a1f;border-radius:6px;box-shadow:inset 0 0 0 1px #1c3224"></div>
<svg style="left:1582px;top:714px" width="24" height="24" viewBox="0 0 24 24"><path d="M12 2.5l9.5 7l-3.6 11h-11.8l-3.6 -11z" fill="#258542"/></svg>
<div class="t" style="left:1624.20px;top:705.68px;line-height:20px;font-size:16px;color:#eeeff1;font-family:'Liberation Sans';-webkit-text-stroke:0.5px currentColor;letter-spacing:0.657px;">QuantumVision-X</div>
<div class="t" style="left:1624.20px;top:723.17px;line-height:20px;font-size:14.5px;color:#8d9096;font-family:'Liberation Sans';-webkit-text-stroke:0.35px currentColor;letter-spacing:0.050px;">85k users</div>
<div class="card" style="left:280px;top:788px;width:386px;height:260px"></div>
<svg class="ic" style="left:298px;top:813px;color:#eeeff1" width="21" height="21" viewBox="0 0 24 24" stroke-width="2.1"><circle cx="12" cy="12" r="9"/><path d="M3.6 9h16.8 M3.6 15h16.8 M11.5 3a17 17 0 0 0 0 18 M12.5 3a17 17 0 0 1 0 18"/></svg>
<div class="t" style="left:330.50px;top:813.83px;line-height:20px;font-size:16px;color:#eeeff1;font-family:'Liberation Sans';-webkit-text-stroke:0.5px currentColor;letter-spacing:0.567px;">Global AI Trends</div>
<div class="a" style="left:543px;top:808px;width:103px;height:32px;border:1px solid #292c31;border-radius:5px"></div>
<svg class="ic" style="left:554px;top:816px;color:#eeeff1" width="16" height="16" viewBox="0 0 24 24" stroke-width="2.3"><path d="M4 17v2a2 2 0 0 0 2 2h12a2 2 0 0 0 2 -2v-2 M7 11l5 5l5 -5 M12 4v12"/></svg>
<div class="t" style="left:574.80px;top:814.34px;line-height:20px;font-size:12.5px;color:#e8e9eb;font-family:'Liberation Sans';font-weight:700;letter-spacing:-0.171px;">Download</div>
<div class="a" style="left:300px;top:860px;width:346px;height:32px;border-radius:16px;background:#202327"></div>
<div class="a" style="left:300px;top:860px;width:232px;height:32px;border-radius:16px;background:#2a4e7c"></div>
<div class="t" style="left:319.50px;top:865.47px;line-height:20px;font-size:15px;color:#eeeff1;font-family:'Liberation Sans';-webkit-text-stroke:0.35px currentColor;letter-spacing:0.725px;">India</div>
<div class="t" style="left:603.50px;top:865.46px;line-height:20px;font-size:14px;color:#eeeff1;font-family:'Liberation Sans';-webkit-text-stroke:0.35px currentColor;letter-spacing:-1.100px;">67%</div>
<div class="a" style="left:300px;top:902px;width:346px;height:32px;border-radius:16px;background:#202327"></div>
<div class="a" style="left:300px;top:902px;width:270px;height:32px;border-radius:16px;background:#4e3b6f"></div>
<div class="t" style="left:319.50px;top:907.07px;line-height:20px;font-size:15px;color:#eeeff1;font-family:'Liberation Sans';-webkit-text-stroke:0.35px currentColor;letter-spacing:-0.042px;">United States</div>
<div class="t" style="left:603.50px;top:907.06px;line-height:20px;font-size:14px;color:#eeeff1;font-family:'Liberation Sans';-webkit-text-stroke:0.35px currentColor;letter-spacing:-1.100px;">78%</div>
<div class="a" style="left:300px;top:943px;width:346px;height:32px;border-radius:16px;background:#202327"></div>
<div class="a" style="left:300px;top:943px;width:180px;height:32px;border-radius:16px;background:#1f5938"></div>
<div class="t" style="left:320.50px;top:948.37px;line-height:20px;font-size:15px;color:#eeeff1;font-family:'Liberation Sans';-webkit-text-stroke:0.35px currentColor;letter-spacing:-0.225px;">Japan</div>
<div class="t" style="left:603.00px;top:948.36px;line-height:20px;font-size:14px;color:#eeeff1;font-family:'Liberation Sans';-webkit-text-stroke:0.35px currentColor;letter-spacing:-0.850px;">52%</div>
<div class="a" style="left:300px;top:985px;width:346px;height:32px;border-radius:16px;background:#202327"></div>
<div class="a" style="left:300px;top:985px;width:277px;height:32px;border-radius:16px;background:#6a5127"></div>
<div class="t" style="left:320.50px;top:990.17px;line-height:20px;font-size:15px;color:#eeeff1;font-family:'Liberation Sans';-webkit-text-stroke:0.35px currentColor;">Germany</div>
<div class="t" style="left:603.00px;top:990.16px;line-height:20px;font-size:14px;color:#eeeff1;font-family:'Liberation Sans';-webkit-text-stroke:0.35px currentColor;letter-spacing:-0.850px;">80%</div>
<div class="card" style="left:690px;top:788px;width:659px;height:260px"></div>
<svg class="ic" style="left:708px;top:814px;color:#eeeff1" width="20" height="20" viewBox="0 0 24 24" stroke-width="2.1"><path d="M4 6h16 M4 12h10 M4 18h7 M14.5 18l2.5 2.5l4 -4.5"/></svg>
<div class="t" style="left:739.20px;top:813.58px;line-height:20px;font-size:16px;color:#eeeff1;font-family:'Liberation Sans';-webkit-text-stroke:0.5px currentColor;letter-spacing:0.500px;">Recent Generations</div>
<div class="a" style="left:1246px;top:808px;width:83px;height:32px;border:1px solid #292c31;border-radius:5px"></div>
<svg class="ic" style="left:1257px;top:816px;color:#eeeff1" width="16" height="16" viewBox="0 0 24 24" stroke-width="2.3"><path d="M14 3v4a1 1 0 0 0 1 1h4 M17 21h-10a2 2 0 0 1 -2 -2v-14a2 2 0 0 1 2 -2h7l5 5v11a2 2 0 0 1 -2 2z M9 13h6 M9 17h4"/></svg>
<div class="t" style="left:1278.30px;top:814.34px;line-height:20px;font-size:12.5px;color:#e8e9eb;font-family:'Liberation Sans';font-weight:700;letter-spacing:-0.380px;">Export</div>
<div class="t" style="left:706.60px;top:860.47px;line-height:20px;font-size:14.5px;color:#9d9fa5;font-family:'Liberation Sans';-webkit-text-stroke:0.35px currentColor;letter-spacing:-0.200px;">Task</div>
<div class="t" style="left:973.20px;top:860.47px;line-height:20px;font-size:14.5px;color:#9d9fa5;font-family:'Liberation Sans';-webkit-text-stroke:0.35px currentColor;letter-spacing:0.300px;">Status</div>
<div class="t" style="left:1136.20px;top:860.47px;line-height:20px;font-size:14.5px;color:#9d9fa5;font-family:'Liberation Sans';-webkit-text-stroke:0.35px currentColor;letter-spacing:0.443px;">Duration</div>
<div class="t" style="left:1268.60px;top:860.47px;line-height:20px;font-size:14.5px;color:#9d9fa5;font-family:'Liberation Sans';-webkit-text-stroke:0.35px currentColor;letter-spacing:0.220px;">Action</div>
<div class="a" style="left:690px;top:893px;width:659px;height:1px;background:#212428"></div>
<div class="a" style="left:690px;top:949px;width:659px;height:1px;background:#212428"></div>
<div class="a" style="left:706px;top:906px;width:32px;height:31px;background:#222529;border-radius:5px"></div>
<svg class="ic" style="left:713px;top:912px;color:#dcdde0" width="18" height="18" viewBox="0 0 24 24" stroke-width="2"><path d="M10.325 4.317c.426 -1.756 2.924 -1.756 3.35 0a1.724 1.724 0 0 0 2.573 1.066c1.543 -.94 3.31 .826 2.37 2.37a1.724 1.724 0 0 0 1.065 2.572c1.756 .426 1.756 2.924 0 3.35a1.724 1.724 0 0 0 -1.066 2.573c.94 1.543 -.826 3.31 -2.37 2.37a1.724 1.724 0 0 0 -2.572 1.065c-.426 1.756 -2.924 1.756 -3.35 0a1.724 1.724 0 0 0 -2.573 -1.066c-1.543 .94 -3.31 -.826 -2.37 -2.37a1.724 1.724 0 0 0 -1.065 -2.572c-1.756 -.426 -1.756 -2.924 0 -3.35a1.724 1.724 0 0 0 1.066 -2.573c-.94 -1.543 .826 -3.31 2.37 -2.37c1 .608 2.296 .07 2.572 -1.065z"/><circle cx="12" cy="12" r="3"/></svg>
<div class="t" style="left:749.10px;top:911.47px;line-height:20px;font-size:14.5px;color:#e6e7ea;font-family:'Liberation Sans';-webkit-text-stroke:0.35px currentColor;letter-spacing:0.044px;">Model Fine-Tuning</div>
<div class="a" style="left:973px;top:917px;width:8px;height:8px;border-radius:50%;background:#1fa8f0"></div>
<div class="t" style="left:988.90px;top:911.47px;line-height:20px;font-size:14.5px;color:#e6e7ea;font-family:'Liberation Sans';-webkit-text-stroke:0.35px currentColor;letter-spacing:0.310px;">In Progress</div>
<svg class="ic" style="left:1136px;top:913px;color:#c9cbcf" width="15" height="15" viewBox="0 0 24 24" stroke-width="2.3"><circle cx="12" cy="12" r="9"/><path d="M12 7v5l3 3"/></svg>
<div class="t" style="left:1155.30px;top:910.17px;line-height:20px;font-size:14.5px;color:#cdd0d4;font-family:'Liberation Sans';-webkit-text-stroke:0.35px currentColor;letter-spacing:0.320px;">2h 30m</div>
<svg class="ic" style="left:1276px;top:912px;color:#c9cbcf" width="17" height="17" viewBox="0 0 24 24" stroke-width="2.1"><circle cx="12" cy="12" r="2"/><path d="M22 12c-2.667 4.667 -6 7 -10 7s-7.333 -2.333 -10 -7c2.667 -4.667 6 -7 10 -7s7.333 2.333 10 7"/></svg>
<div class="a" style="left:706px;top:962px;width:32px;height:31px;background:#222529;border-radius:5px"></div>
<svg class="ic" style="left:713px;top:968px;color:#dcdde0" width="18" height="18" viewBox="0 0 24 24" stroke-width="2"><path d="M7 18a4.6 4.4 0 0 1 0 -9a5 4.5 0 0 1 11 2h1a3.5 3.5 0 0 1 0 7h-1 M9 15l3 -3l3 3 M12 12v9"/></svg>
<div class="t" style="left:749.10px;top:968.17px;line-height:20px;font-size:14.5px;color:#e6e7ea;font-family:'Liberation Sans';-webkit-text-stroke:0.35px currentColor;letter-spacing:0.112px;">Dataset Processing</div>
<div class="a" style="left:973px;top:974px;width:8px;height:8px;border-radius:50%;background:#f5a623"></div>
<div class="t" style="left:989.90px;top:968.17px;line-height:20px;font-size:14.5px;color:#e6e7ea;font-family:'Liberation Sans';-webkit-text-stroke:0.35px currentColor;letter-spacing:-0.267px;">On Hold</div>
<svg class="ic" style="left:1136px;top:970px;color:#c9cbcf" width="15" height="15" viewBox="0 0 24 24" stroke-width="2.3"><circle cx="12" cy="12" r="9"/><path d="M12 7v5l3 3"/></svg>
<div class="t" style="left:1154.30px;top:966.87px;line-height:20px;font-size:14.5px;color:#cdd0d4;font-family:'Liberation Sans';-webkit-text-stroke:0.35px currentColor;letter-spacing:-0.340px;">1h 15m</div>
<svg class="ic" style="left:1276px;top:969px;color:#c9cbcf" width="17" height="17" viewBox="0 0 24 24" stroke-width="2.1"><circle cx="12" cy="12" r="2"/><path d="M22 12c-2.667 4.667 -6 7 -10 7s-7.333 -2.333 -10 -7c2.667 -4.667 6 -7 10 -7s7.333 2.333 10 7"/></svg>
<div class="card" style="left:1373px;top:788px;width:523px;height:260px"></div>
<svg class="ic" style="left:1391px;top:814px;color:#eeeff1" width="21" height="21" viewBox="0 0 24 24" stroke-width="2"><path d="M5 6a1 1 0 0 1 1 -1h12a1 1 0 0 1 1 1v12a1 1 0 0 1 -1 1h-12a1 1 0 0 1 -1 -1z M9 9h6v6h-6z M3 10h2 M3 14h2 M10 3v2 M14 3v2 M21 10h-2 M21 14h-2 M14 21v-2 M10 21v-2"/></svg>
<div class="t" style="left:1422.60px;top:813.93px;line-height:20px;font-size:16px;color:#eeeff1;font-family:'Liberation Sans';-webkit-text-stroke:0.5px currentColor;letter-spacing:0.516px;">Resource Utilization</div>
<div class="a" style="left:1760px;top:808px;width:116px;height:32px;border:1px solid #292c31;border-radius:5px"></div>
<svg class="ic" style="left:1772px;top:816px;color:#eeeff1" width="16" height="16" viewBox="0 0 24 24" stroke-width="2.3"><path d="M6 20v-2 M12 20v-6 M18 20v-12"/></svg>
<div class="t" style="left:1793.00px;top:814.34px;line-height:20px;font-size:12.5px;color:#e8e9eb;font-family:'Liberation Sans';font-weight:700;letter-spacing:-0.190px;">View Report</div>
<div class="a" style="left:1391px;top:854px;width:166px;height:127px;background:#1f5aae;border-radius:6px"></div>
<div class="a" style="left:1391px;top:985px;width:166px;height:60px;background:#b1541f;border-radius:6px"></div>
<div class="a" style="left:1561px;top:854px;width:147px;height:125px;background:#7242ae;border-radius:6px"></div>
<div class="a" style="left:1561px;top:983px;width:147px;height:60px;background:#23a662;border-radius:6px"></div>
<div class="a" style="left:1712px;top:854px;width:166px;height:89px;background:#ab2476;border-radius:6px"></div>
<div class="a" style="left:1712px;top:947px;width:84px;height:60px;background:#ae7b23;border-radius:6px"></div>
<div class="a" style="left:1800px;top:947px;width:78px;height:60px;background:#6c7684;border-radius:6px"></div>
<div class="t" style="left:1439.20px;top:914.56px;line-height:20px;font-size:14px;color:#f3f3f5;font-family:'Liberation Sans';font-weight:700;letter-spacing:0.112px;">NeuraText</div>
<div class="t" style="left:1595.20px;top:913.66px;line-height:20px;font-size:14px;color:#f3f3f5;font-family:'Liberation Sans';font-weight:700;letter-spacing:0.033px;">DeepScribe</div>
<div class="t" style="left:1765.30px;top:895.56px;line-height:20px;font-size:14px;color:#f3f3f5;font-family:'Liberation Sans';font-weight:700;letter-spacing:-0.157px;">VisioGen</div>
</body></html>
